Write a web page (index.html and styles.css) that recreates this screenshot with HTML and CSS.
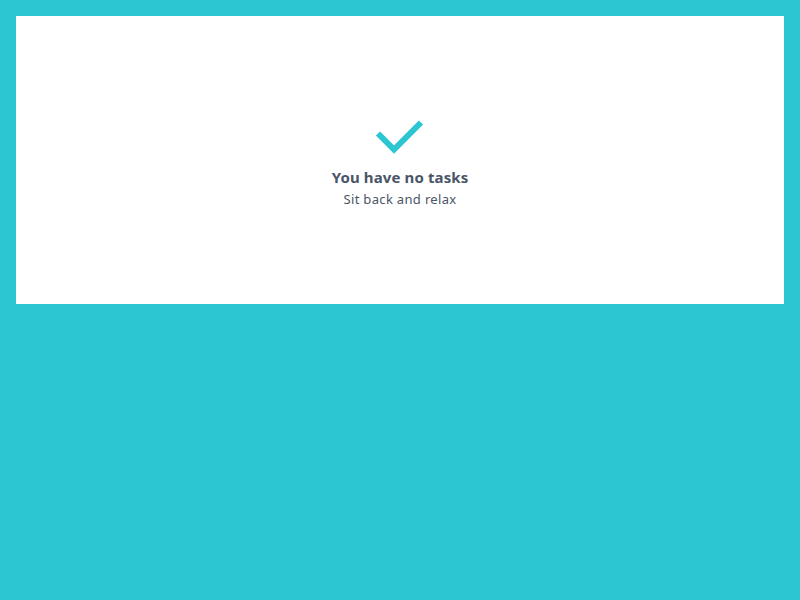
FILE: index.html
```html
<!DOCTYPE html>
<html lang="en">
<head>
<meta charset="utf-8">
<title>No tasks</title>
<link rel="stylesheet" href="styles.css">
</head>
<body>
  <main class="card">
    <svg class="check" width="50" height="38" viewBox="0 0 50 38" aria-hidden="true">
      <polyline points="3,14.5 19,30.5 46,3.5" fill="none" stroke="#2cc5d2" stroke-width="6" stroke-linecap="butt" stroke-linejoin="miter"/>
    </svg>
    <h1 class="title">You have no tasks</h1>
    <p class="subtitle">Sit back and relax</p>
  </main>
</body>
</html>
```
FILE: styles.css
```css
html, body {
  margin: 0;
  padding: 0;
}
body {
  background: #2cc5d2;
  padding: 16px;
  height: 600px;
  box-sizing: border-box;
  font-family: "Noto Sans", "Open Sans", sans-serif;
}
.card {
  background: #ffffff;
  height: 288px;
  box-sizing: border-box;
  padding-top: 103px;
  display: flex;
  flex-direction: column;
  align-items: center;
}
.check {
  display: block;
}
.title {
  margin: 10px 0 0;
  font-size: 15px;
  line-height: 20px;
  font-weight: 700;
  letter-spacing: 0.12px;
  color: #4a5568;
}
.subtitle {
  margin: 3px 0 0;
  font-size: 13px;
  line-height: 18px;
  font-weight: 400;
  letter-spacing: 0.33px;
  color: #4a5568;
}
```
